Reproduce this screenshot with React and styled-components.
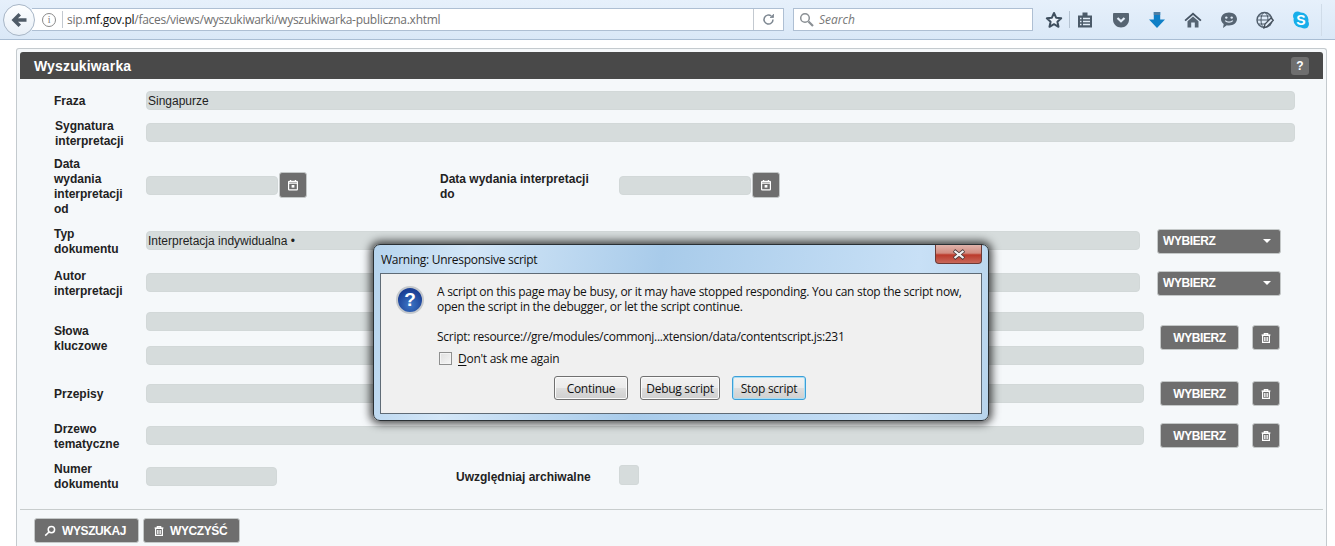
import React from "react";
import styled, { createGlobalStyle } from "styled-components";

const Global = createGlobalStyle`
  html, body { margin: 0; padding: 0; background: #fff; overflow: hidden; }
  #root { width: 1335px; height: 546px; position: relative; overflow: hidden; font-family: "Liberation Sans", Arial, sans-serif; }
`;

const Toolbar = styled.header`
  height: 39px; display: flex; align-items: center; padding-left: 3px;
  background: linear-gradient(#e6f0fb, #dae8f7); border-bottom: 1px solid #a9bdd3; position: relative;
`;
const BackButton = styled.div`
  width: 32px; height: 32px; box-sizing: border-box; border-radius: 50%; border: 1px solid #a8b6c6; flex: none;
  background: linear-gradient(#fdfeff, #e8eff7); display: flex; align-items: center; justify-content: center;
  position: relative; z-index: 1; margin-right: -3px;
`;
const UrlBar = styled.div`
  width: 751px; height: 21px; flex: none; background: #fff; border: 1px solid #aebfd3; border-left: 0;
  display: flex; align-items: center; font: 12px "Open Sans", sans-serif; letter-spacing: -0.27px; color: #6f6f6f;
`;
const InfoIcon = styled.span`
  width: 12px; height: 12px; border: 1px solid #8a8a8a; border-radius: 50%; margin-left: 10px; flex: none;
  font: 10px/12px "Liberation Serif", serif; text-align: center; color: #777;
`;
const UrlDivider = styled.span`width: 1px; height: 17px; background: #c3c9d0; margin: 0 4px 0 6px; flex: none;`;
const UrlHost = styled.b`font-weight: 400; color: #111;`;
const UrlEnd = styled.div`
  margin-left: auto; width: 29px; height: 100%; border-left: 1px solid #c3c9d0; display: flex; align-items: center; justify-content: center;
`;
const SearchBar = styled.div`
  width: 233px; height: 21px; margin-left: 9px; flex: none; background: #fff; border: 1px solid #aebfd3;
  display: flex; align-items: center; gap: 5px; padding-left: 5px;
  font: italic 12px "Open Sans", sans-serif; color: #777;
`;
const Tools = styled.div`display: flex; align-items: center; margin-left: 11px; height: 100%;`;
const ToolSlot = styled.span`
  width: ${p => p.$w || 36}px; margin-right: ${p => p.$mr || 0}px; padding-left: ${p => p.$pl || 0}px;
  box-sizing: border-box; display: flex; justify-content: ${p => p.$j || "center"}; align-items: center; flex: none;
`;
const ToolSep = styled.span`width: 1px; height: 17px; background: #b5c3d2; flex: none;`;
const EndSep = styled.span`width: 1px; height: 32px; background: #d0dce9; margin-left: 2px; flex: none;`;

const Panel = styled.main`
  margin: 8px 0 0 16px; width: 1311px; height: 510px; box-sizing: border-box; padding: 3px;
  background: #f5f8fa; border: 1px solid #c4cace; border-bottom: 0; border-radius: 3px 3px 0 0;
`;
const PanelHead = styled.div`
  height: 27px; background: #494949; border-radius: 3px 3px 0 0; display: flex; align-items: center; justify-content: space-between;
  padding: 1px 14px 0 14px; box-sizing: border-box; color: #fff; font-weight: 700; font-size: 14px; letter-spacing: 0.15px;
`;
const Help = styled.span`
  width: 18px; height: 18px; border-radius: 3px; background: #6f6f6f; font-size: 12px; font-weight: 700; text-align: center; line-height: 18px; color: #fff;
  margin-top: -1px;
`;
const Form = styled.div`display: flex; flex-direction: column; padding-left: 34px;`;
const Row = styled.div`
  display: flex; align-items: center; height: ${p => p.$h}px; margin-top: ${p => p.$mt || 0}px;
`;
const Label = styled.label`
  width: 92px; flex: none; font-size: 12px; font-weight: 700; line-height: 15px; color: #222; box-sizing: border-box;
  padding-left: ${p => p.$pl || 0}px; padding-right: ${p => p.$pr || 0}px; margin-top: ${p => p.$mt || 0}px;
`;
const Field = styled.div`
  height: 19px; border-radius: 4px; background: #d6dcdc; flex: none; width: ${p => p.$w}px; box-sizing: border-box;
  font-size: 12px; line-height: 18px; padding-left: 1px; color: #222; border: 1px solid #d2d8d8;
`;
const Btn = styled.button`
  height: 25px; box-sizing: border-box; border: 1px solid #c4c8c8; border-radius: 3px; background: #6e6e6e; color: #fff;
  font: 700 12px "Liberation Sans", Arial, sans-serif; letter-spacing: -0.4px; display: flex; align-items: center; flex: none;
  width: ${p => p.$w}px; margin-left: ${p => p.$ml || 0}px; justify-content: ${p => p.$j || "center"}; gap: ${p => p.$gap || 0}px;
  padding: 0 ${p => p.$pr || 0}px 0 ${p => p.$pl || 0}px; margin-top: ${p => p.$mt || 0}px; margin-bottom: ${p => p.$mb || 0}px;
`;
const CalBtn = styled(Btn)`height: 26px; margin-left: 1px;`;
const Caret = styled.span`
  margin-left: auto; border-left: 4.5px solid transparent; border-right: 4.5px solid transparent; border-top: 4px solid #fff;
`;
const Stack = styled.div`display: flex; flex-direction: column; gap: 15px; flex: none;`;
const Label2 = styled(Label)`width: ${p => p.$w}px; margin-left: ${p => p.$ml}px;`;
const CheckBox = styled.span`width: 20px; height: 20px; border-radius: 3px; background: #d6dcdc; border: 1px solid #d2d8d8; box-sizing: border-box; flex: none; margin-top: -2px;`;
const Rule = styled.hr`border: 0; border-top: 1px solid #c8cdcd; margin: 18px 0 0 0; height: 0;`;
const Actions = styled.div`display: flex; gap: 4px; padding: 8px 0 0 14px;`;

const Dialog = styled.div`
  position: absolute; left: 373px; top: 244px; width: 616px; height: 177px; box-sizing: border-box; padding: 0 6px 6px 6px;
  border: 1px solid #2a3034; border-radius: 7px;
  background: linear-gradient(100deg, #b6d4ee 0%, #d3e6f7 15%, #a8cbea 45%, #c8e0f6 85%, #b7d4ec 100%);
  box-shadow: 0 0 9px 3px rgba(0,0,0,.7); display: flex; flex-direction: column;
  font: 12px "Open Sans", sans-serif; color: #111; letter-spacing: -0.28px;
`;
const DialogTitle = styled.div`height: 28px; display: flex; align-items: center; padding-left: 1px; flex: none;`;
const CloseBtn = styled.div`
  position: absolute; right: 6px; top: 0; width: 47px; height: 19px; box-sizing: border-box; border: 1px solid #6c3a36; border-top: 0;
  border-radius: 0 0 4px 4px; background: linear-gradient(#e0b3ab 0%, #d28c80 45%, #bb3a2b 55%, #c8685a 100%);
  display: flex; align-items: center; justify-content: center;
`;
const DialogBody = styled.div`
  flex: 1; background: #f0f0f0; border: 1px solid #5f6b76; box-sizing: border-box; display: flex; padding: 10px 0 0 15px;
`;
const Quest = styled.span`
  width: 28px; height: 28px; border-radius: 50%; flex: none; margin-top: 2px; background: radial-gradient(circle at 50% 70%, #3c76c6, #1b3f95 70%);
  border: 2px solid #c4c8cc; box-sizing: border-box; color: #fff; font: 700 19px/24px "Liberation Sans", sans-serif; text-align: center;
`;
const DialogCol = styled.div`margin-left: 13px; display: flex; flex-direction: column; flex: 1;`;
const Para = styled.p`margin: ${p => p.$mt || 0}px 0 0; line-height: 15px; white-space: nowrap;`;
const CheckRow = styled.label`display: flex; align-items: center; gap: 6px; margin: 7px 0 0 2px; line-height: 15px;`;
const SysCheck = styled.span`width: 13px; height: 13px; box-sizing: border-box; border: 1px solid #8e8f8f; background: linear-gradient(135deg, #dfdfdf, #f6f6f6); box-shadow: inset 0 0 0 1px #f4f4f4; flex: none;`;
const Under = styled.u`text-underline-offset: 2px;`;
const DialogActions = styled.div`display: flex; gap: 12px; margin-top: 10px; padding-left: 117px;`;
const SysBtn = styled.button`
  width: ${p => p.$w || 74}px; height: 24px; box-sizing: border-box; border-radius: 3px; padding: 0;
  border: 1px solid ${p => p.$focus ? "#3c9fd8" : "#707070"};
  box-shadow: ${p => p.$focus ? "inset 0 0 0 1px #a8def5" : "inset 0 0 0 1px #fbfbfb"};
  background: linear-gradient(#f2f2f2 0%, #ebebeb 48%, #dddddd 52%, #cfcfcf 100%);
  font: 12px "Open Sans", sans-serif; color: #111; letter-spacing: -0.28px;
`;

const Trash = () => (
  <svg width="12" height="12" viewBox="0 0 12 12" fill="none" stroke="#fff" strokeWidth="1.2">
    <path d="M1.5 3h9M4.3 3V1.6h3.4V3" />
    <path d="M2.6 3.4h6.8v7H2.6z" />
    <path d="M4.6 5v4M6 5v4M7.4 5v4" strokeWidth=".9" />
  </svg>
);
const Cal = () => (
  <svg width="12" height="12" viewBox="0 0 12 12" fill="none" stroke="#fff" strokeWidth="1.2">
    <rect x="1.6" y="2.4" width="8.8" height="8.4" rx=".6" />
    <path d="M3.6 1v2M8.4 1v2M1.6 4.2h8.8" />
    <rect x="4.6" y="6" width="2.8" height="2.6" fill="#fff" stroke="none" />
  </svg>
);
const Mag = () => (
  <svg width="12" height="12" viewBox="0 0 12 12" fill="none" stroke="#fff" strokeWidth="1.5">
    <circle cx="7.4" cy="4.6" r="3.2" /><path d="M5 7L1.2 10.6" />
  </svg>
);
const ic = { width: 18, height: 18, viewBox: "0 0 18 18" };
const Star = () => <svg {...ic}><path d="M9 2l2.1 4.7 5.1.6-3.8 3.4 1.100 5.100L9 13.200 4.500 15.800l1.100-5.100L1.800 7.300l5.100-.6z" fill="#fff" fillOpacity=".35" stroke="#3f4f5f" strokeWidth="2" strokeLinejoin="round" /></svg>;
const Clip = () => <svg {...ic}><path d="M2 4.500h14v12H2z" fill="#4b5a69" /><rect x="6.500" y="1.500" width="5" height="4" fill="#4b5a69" /><path d="M4 7.500h1.500M7 7.500h7M4 10.500h1.500M7 10.500h7M4 13.500h1.500M7 13.500h7" stroke="#e2edf8" strokeWidth="1.400" /></svg>;
const Pocket = () => <svg {...ic}><path d="M1 3.200C1 2.500 1.500 2 2.200 2h13.600c.7 0 1.200.5 1.200 1.200v5.300C17 13 13.300 16.500 9 16.500S1 13 1 8.500z" fill="#566472" /><path d="M5.500 7L9 10.300 12.500 7" fill="none" stroke="#e4eef9" strokeWidth="2.200" /></svg>;
const Down = () => <svg {...ic}><path d="M5.800 1h6.400v7.500H17L9 17 1 8.500h4.800z" fill="#0f7fc6" /><path d="M5.800 1h6.400v3H5.800z" fill="#4f7ea3" /></svg>;
const Home = () => <svg {...ic}><path d="M9 1.500L.5 9l1.200 1.200L9 4l7.300 6.200L17.500 9z" fill="#465463" /><path d="M3.500 10.200L9 5.500l5.500 4.700v6.300h-3.700v-5H7.200v5H3.500z" fill="#566472" /></svg>;
const Chat = () => <svg {...ic}><path d="M9 1.500c4.500 0 8 2.800 8 6.500s-3.500 6.500-8 6.500c-.8 0-1.500-.1-2.200-.2L3 17l.7-4C2 11.800 1 10 1 8c0-3.700 3.500-6.500 8-6.500z" fill="#566472" /><circle cx="6.300" cy="6.600" r="1.200" fill="#dfeaf6" /><circle cx="11.700" cy="6.600" r="1.200" fill="#dfeaf6" /><path d="M5.200 9.600c1.900 1.900 5.700 1.900 7.600 0" stroke="#dfeaf6" strokeWidth="1.300" fill="none" /></svg>;
const Globe = () => <svg {...ic} fill="none" stroke="#4f5d6b" strokeWidth="1"><circle cx="8.500" cy="9" r="7.500" strokeWidth="1.400" /><ellipse cx="8.500" cy="9" rx="3.500" ry="7.500" /><path d="M1 9h15M2.300 5h12.400M2.300 13h12.400" /><path d="M8 16.800l1-3.800 6-6 2.300 2.300-6 6z" fill="#dfeaf6" stroke="#444f5b" strokeWidth="1.300" /></svg>;
const Skype = () => <svg {...ic}><circle cx="5.500" cy="5" r="4.500" fill="#18aeea" /><circle cx="12.500" cy="13" r="4.500" fill="#18aeea" /><circle cx="9" cy="9" r="7.500" fill="#18aeea" /><text x="9" y="14" textAnchor="middle" fill="#fff" fontFamily="Liberation Sans" fontWeight="700" fontSize="14">S</text></svg>;

export default function App() {
  return (
    <>
      <Global />
      <Toolbar>
        <BackButton>
          <svg width="16" height="14" viewBox="0 0 16 14"><path d="M7.500 0L.5 7l7 7 2.500-2.500L7 8.700h8.500V5.300H7L10 2.500z" fill="#4f5b67" /></svg>
        </BackButton>
        <UrlBar>
          <InfoIcon>i</InfoIcon>
          <UrlDivider />
          <span>sip.<UrlHost>mf.gov.pl</UrlHost>/faces/views/wyszukiwarki/wyszukiwarka-publiczna.xhtml</span>
          <UrlEnd>
            <svg width="13" height="13" viewBox="0 0 13 13" fill="none" stroke="#7d8791" strokeWidth="1.500"><path d="M11 6.500A4.500 4.500 0 1 1 9.300 3" /><path d="M11.500 1v3.500H8" fill="#7d8791" strokeWidth="0.800" /></svg>
          </UrlEnd>
        </UrlBar>
        <SearchBar>
          <svg width="15" height="15" viewBox="0 0 15 15" fill="none" stroke="#8a8f94"><circle cx="6" cy="6" r="4.300" strokeWidth="1.500" /><path d="M9.500 9.500L14 14" strokeWidth="2.200" /></svg>
          Search
        </SearchBar>
        <Tools>
          <ToolSlot $w={25} $j="flex-start" $pl={1}><Star /></ToolSlot>
          <ToolSep />
          <ToolSlot $w={30} $mr={3}><Clip /></ToolSlot>
          <ToolSlot><Pocket /></ToolSlot>
          <ToolSlot><Down /></ToolSlot>
          <ToolSlot><Home /></ToolSlot>
          <ToolSlot><Chat /></ToolSlot>
          <ToolSlot><Globe /></ToolSlot>
          <ToolSlot><Skype /></ToolSlot>
          <EndSep />
        </Tools>
      </Toolbar>

      <Panel>
        <PanelHead>Wyszukiwarka<Help>?</Help></PanelHead>
        <Form>
          <Row $h={42}>
            <Label $mt={2}>Fraza</Label>
            <Field $w={1149}>Singapurze</Field>
          </Row>
          <Row $h={22}>
            <Label $pl={1} $mt={3}>Sygnatura<br />interpretacji</Label>
            <Field $w={1149} />
          </Row>
          <Row $h={60} $mt={12}>
            <Label $mt={3}>Data<br />wydania<br />interpretacji<br />od</Label>
            <Field $w={132} />
            <CalBtn $w={28}><Cal /></CalBtn>
            <Label2 $w={179} $ml={133} $pr={20} $mt={3}>Data wydania interpretacji do</Label2>
            <Field $w={132} />
            <CalBtn $w={28}><Cal /></CalBtn>
          </Row>
          <Row $h={30} $mt={10}>
            <Label $mt={4}>Typ<br />dokumentu</Label>
            <Field $w={994}>Interpretacja indywidualna •</Field>
            <Btn $w={124} $ml={17} $j="flex-start" $pl={5} $pr={9} $mt={2}>WYBIERZ<Caret /></Btn>
          </Row>
          <Row $h={30} $mt={12}>
            <Label $mt={4}>Autor<br />interpretacji</Label>
            <Field $w={994} />
            <Btn $w={124} $ml={17} $j="flex-start" $pl={5} $pr={9} $mt={2}>WYBIERZ<Caret /></Btn>
          </Row>
          <Row $h={53} $mt={15}>
            <Label>Słowa<br />kluczowe</Label>
            <Stack>
              <Field $w={998} />
              <Field $w={998} />
            </Stack>
            <Btn $w={79} $ml={16} $mb={2}>WYBIERZ</Btn>
            <Btn $w={28} $ml={13} $mb={2}><Trash /></Btn>
          </Row>
          <Row $h={24} $mt={16}>
            <Label $mt={2}>Przepisy</Label>
            <Field $w={998} />
            <Btn $w={79} $ml={16} $mt={1}>WYBIERZ</Btn>
            <Btn $w={28} $ml={13} $mt={1}><Trash /></Btn>
          </Row>
          <Row $h={24} $mt={18}>
            <Label $mt={4}>Drzewo<br />tematyczne</Label>
            <Field $w={998} />
            <Btn $w={79} $ml={16} $mt={1}>WYBIERZ</Btn>
            <Btn $w={28} $ml={13} $mt={1}><Trash /></Btn>
          </Row>
          <Row $h={30} $mt={14}>
            <Label $mt={1}>Numer<br />dokumentu</Label>
            <Field $w={131} />
            <Label2 $w={163} $ml={179} $mt={2}>Uwzględniaj archiwalne</Label2>
            <CheckBox />
          </Row>
        </Form>
        <Rule />
        <Actions>
          <Btn $w={105} $gap={6} $j="flex-start" $pl={9}><Mag />WYSZUKAJ</Btn>
          <Btn $w={97} $gap={5} $j="flex-start" $pl={9}><Trash />WYCZYŚĆ</Btn>
        </Actions>
      </Panel>

      <Dialog>
        <DialogTitle>Warning: Unresponsive script</DialogTitle>
        <CloseBtn>
          <svg width="14" height="11" viewBox="0 0 14 11"><path d="M2 1.500l10 8M12 1.500l-10 8" stroke="#4a3a3a" strokeWidth="3.600" /><path d="M2.500 2l9 7M11.500 2l-9 7" stroke="#f3f3f3" strokeWidth="2.200" /></svg>
        </CloseBtn>
        <DialogBody>
          <Quest>?</Quest>
          <DialogCol>
            <Para>A script on this page may be busy, or it may have stopped responding. You can stop the script now,</Para>
            <Para>open the script in the debugger, or let the script continue.</Para>
            <Para $mt={15}>Script: resource://gre/modules/commonj...xtension/data/contentscript.js:231</Para>
            <CheckRow><SysCheck /><span><Under>D</Under>on't ask me again</span></CheckRow>
            <DialogActions>
              <SysBtn>Continue</SysBtn>
              <SysBtn $w={80}>Debug script</SysBtn>
              <SysBtn $focus>Stop script</SysBtn>
            </DialogActions>
          </DialogCol>
        </DialogBody>
      </Dialog>
    </>
  );
}
